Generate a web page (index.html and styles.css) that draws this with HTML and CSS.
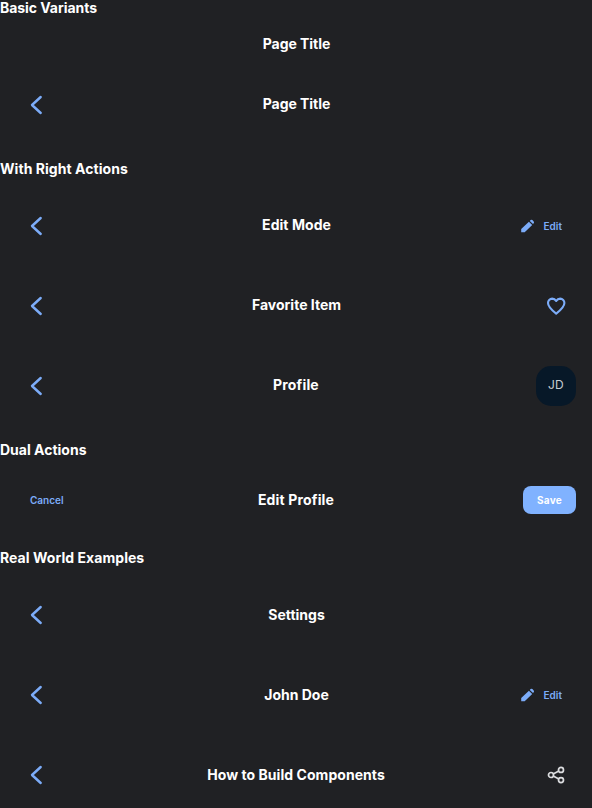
FILE: index.html
```
<!DOCTYPE html>
<html lang="en"><head><meta charset="utf-8"><title>Header</title><link rel="stylesheet" href="styles.css"></head>
<body>
<svg width="0" height="0" class="defs"><defs>
<symbol id="back" viewBox="0 0 24 24"><path d="M16.700 4 8 12l8.700 8" fill="none" stroke="currentColor" stroke-width="2.400" stroke-linecap="round" stroke-linejoin="round"/></symbol>
<symbol id="pencil" viewBox="0 0 16 16"><path fill="currentColor" d="M1.200 14.200v-3.200L8.900 3.700l3.300 3.300-7.500 7.200zM9.800 2.900l.8-.8q.9-.8 1.800 0l1.300 1.300q.8.900 0 1.800l-.7.900z"/></symbol>
<symbol id="heart" viewBox="0 0 24 24"><path fill="none" stroke="currentColor" stroke-width="2.100" stroke-linejoin="round" d="M12.200 19.600C8.200 16.500 4 13 4 9A4.300 4.300 0 0 1 8.200 4.600c1.700 0 3.100.9 4 2.400.9-1.500 2.300-2.400 4-2.400A4.300 4.300 0 0 1 20.400 9c0 4-4.200 7.500-8.200 10.600z"/></symbol>
<symbol id="share" viewBox="0 0 20 20"><g fill="none" stroke="currentColor" stroke-width="1.700"><circle cx="15" cy="4.900" r="2.500"/><circle cx="5" cy="10" r="2.500"/><circle cx="15" cy="15.100" r="2.500"/><path d="m7.200 8.900 5.600-2.900M7.200 11.100l5.600 2.900"/></g></symbol>
</defs></svg>
<h2 class="narrow">Basic Variants</h2>
<header class="first"><h1 class="narrow">Page Title</h1></header>
<header class="tall"><svg class="back"><use href="#back"/></svg><h1 class="narrow">Page Title</h1></header>
<h2 class="section wide">With Right Actions</h2>
<header class="tall lead"><svg class="back"><use href="#back"/></svg><h1 class="wide">Edit Mode</h1><button class="edit"><svg><use href="#pencil"/></svg>Edit</button></header>
<header class="tall"><svg class="back"><use href="#back"/></svg><h1>Favorite Item</h1><svg class="heart"><use href="#heart"/></svg></header>
<header class="tall"><svg class="back"><use href="#back"/></svg><h1 class="wider">Profile</h1><span class="avatar">JD</span></header>
<h2 class="section">Dual Actions</h2>
<header class="form"><button class="cancel">Cancel</button><h1 class="wider">Edit Profile</h1><button class="save">Save</button></header>
<h2 class="examples wide">Real World Examples</h2>
<div class="group">
<header class="tall lead"><svg class="back"><use href="#back"/></svg><h1>Settings</h1></header>
<header class="tall"><svg class="back"><use href="#back"/></svg><h1>John Doe</h1><button class="edit"><svg><use href="#pencil"/></svg>Edit</button></header>
<header class="tall article"><svg class="back"><use href="#back"/></svg><h1 class="wide">How to Build Components</h1><svg class="share"><use href="#share"/></svg></header>
</div>
</body></html>
```
FILE: styles.css
```
* { box-sizing: border-box; }
body { margin: 0; height: 808px; overflow: hidden; background: #202124; color: #fff; font-family: Inter, sans-serif; }
.defs { display: none; }
h1, h2 { margin: 0; font-size: 14px; line-height: 16px; font-weight: 700; }
.narrow { letter-spacing: -.05px; }
.wide { letter-spacing: .05px; }
.wider { letter-spacing: .16px; }
header { display: grid; grid-template-columns: 1fr auto 1fr; align-items: center; padding: 0 16px; }
h1 { grid-column: 2; grid-row: 1; padding-left: 1px; }
h1.wider, .article h1 { padding-left: 0; }
header > :first-child:not(h1) { justify-self: start; }
header > :nth-child(3) { justify-self: end; }
.tall { height: 80px; }
.tall h1 { padding-bottom: 2px; }
.group .tall h1 { padding-bottom: 0; }
.first { height: 49px; padding-top: 7px; }
.back { width: 24px; height: 24px; margin-left: 8px; color: #7cacf8; }
.section { margin-top: 16px; }
.examples { margin-top: 8px; }
.lead { margin-top: 9px; }
.form { height: 84px; }
button { border: 0; background: none; padding: 0 14px; font: 600 10px/28px Inter, sans-serif; color: #7cacf8; }
.edit { display: flex; align-items: center; gap: 8px; }
.edit svg { width: 16px; height: 16px; }
.save { height: 28px; border-radius: 8px; background: #80b2ff; color: #fff; font-weight: 700; letter-spacing: .25px; }
.heart { width: 24px; height: 24px; margin-right: 8px; color: #7cacf8; }
.share { width: 20px; height: 20px; margin-right: 10px; color: #dcdde0; }
.avatar { width: 40px; height: 40px; border-radius: 15px; background: #071828; color: #c8cdd3; font-size: 12px; line-height: 38px; text-align: center; letter-spacing: .2px; }
```
